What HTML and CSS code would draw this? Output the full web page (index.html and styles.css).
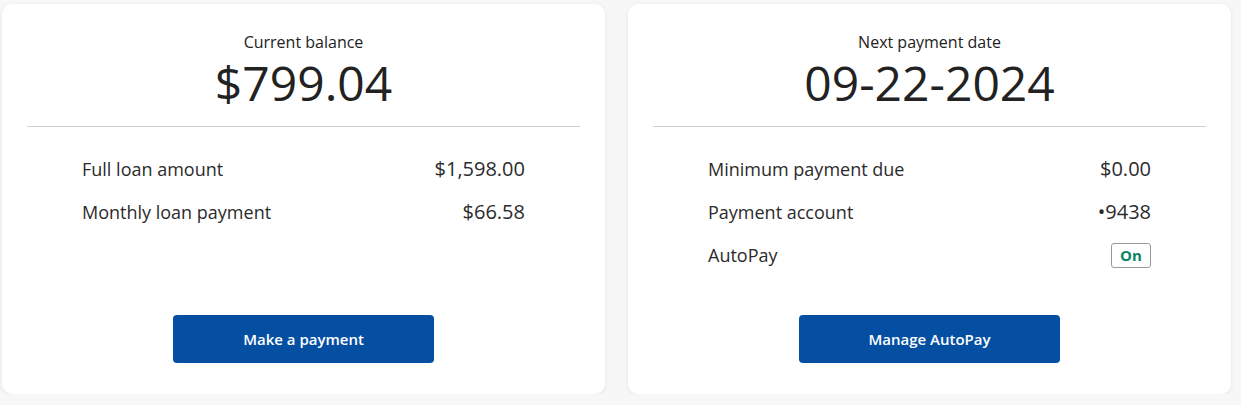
FILE: index.html
```html
<!DOCTYPE html>
<html lang="en">
<head>
  <meta charset="UTF-8">
  <meta name="viewport" content="width=device-width, initial-scale=1.0">
  <title>Loan summary</title>
  <link rel="stylesheet" href="styles.css">
</head>
<body>
  <div class="summary">
    <div class="card">
      <div class="card-head">
        <div class="caption">Current balance</div>
        <div class="big">$799.04</div>
      </div>
      <div class="rows">
        <div class="row">
          <span class="label">Full loan amount</span>
          <span class="value">$1,598.00</span>
        </div>
        <div class="row">
          <span class="label">Monthly loan payment</span>
          <span class="value">$66.58</span>
        </div>
      </div>
      <div class="actions">
        <button class="btn">Make a payment</button>
      </div>
    </div>

    <div class="card">
      <div class="card-head">
        <div class="caption">Next payment date</div>
        <div class="big">09-22-2024</div>
      </div>
      <div class="rows">
        <div class="row">
          <span class="label">Minimum payment due</span>
          <span class="value">$0.00</span>
        </div>
        <div class="row">
          <span class="label">Payment account</span>
          <span class="value">&bull;9438</span>
        </div>
        <div class="row">
          <span class="label">AutoPay</span>
          <span class="badge">On</span>
        </div>
      </div>
      <div class="actions">
        <button class="btn">Manage AutoPay</button>
      </div>
    </div>
  </div>
</body>
</html>
```

FILE: styles.css
```css
  body {
    margin: 0;
    background: #f7f7f7;
    font-family: "Open Sans", "Liberation Sans", sans-serif;
    color: #2b2b2b;
  }
  .summary {
    display: grid;
    grid-template-columns: 1fr 1fr;
    gap: 23px;
    padding: 4px 10px 0 2px;
  }
  .card {
    display: flex;
    flex-direction: column;
    height: 390px;
    box-sizing: border-box;
    padding: 29px 25px 31px;
    background: #fff;
    border-radius: 10px;
    box-shadow: 0 1px 4px 0 rgba(0,0,0,.08);
  }
  .card-head {
    text-align: center;
    padding-bottom: 12px;
    border-bottom: 1px solid #cfcfcf;
  }
  .card-head .caption {
    font-size: 16px;
    line-height: 18px;
    color: #222;
  }
  .card-head .big {
    margin-top: 1px;
    font-size: 48px;
    line-height: 62px;
    color: #222;
  }
  .rows {
    display: flex;
    flex-direction: column;
    gap: 19px;
    padding: 30px 55px 0;
  }
  .row {
    display: flex;
    justify-content: space-between;
    align-items: center;
    height: 24px;
  }
  .row .label {
    font-size: 18px;
    line-height: 24px;
  }
  .row .value {
    font-size: 20px;
    line-height: 24px;
  }
  .badge {
    box-sizing: border-box;
    width: 40px;
    height: 25px;
    border: 1px solid #9a9a9a;
    border-radius: 3px;
    font-size: 15px;
    font-weight: 700;
    line-height: 23px;
    text-align: center;
    color: #0b8463;
  }
  .actions {
    margin-top: auto;
    display: flex;
    justify-content: center;
  }
  .btn {
    width: 261px;
    height: 48px;
    border: none;
    border-radius: 4px;
    background: #054fa3;
    color: #fff;
    font-family: inherit;
    font-size: 15px;
    font-weight: 600;
    cursor: pointer;
  }
```
